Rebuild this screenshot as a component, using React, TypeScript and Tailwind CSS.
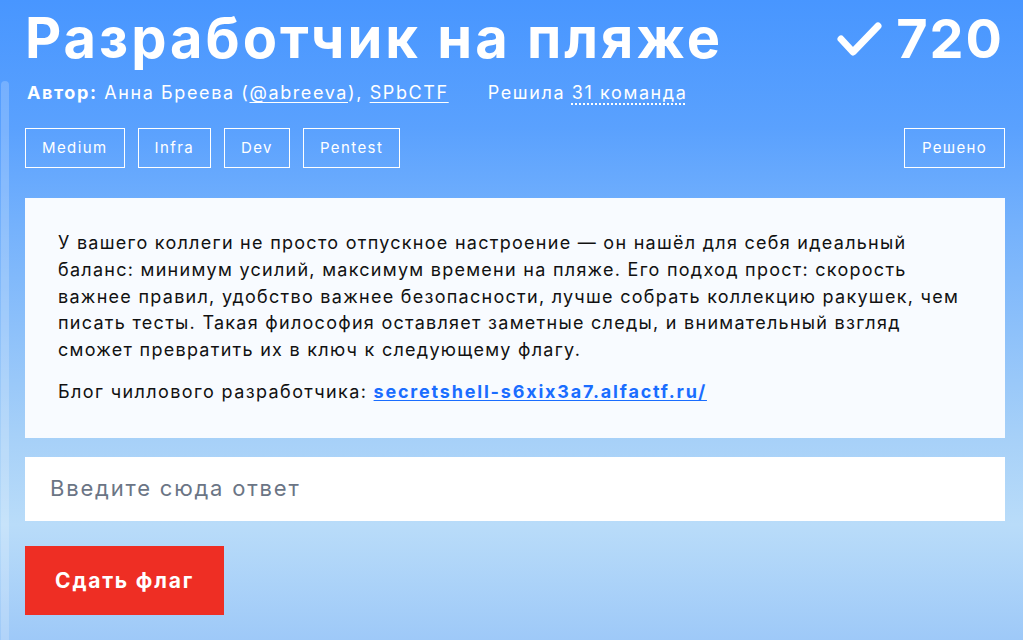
import React from "react";

export default function App() {
  const font = { fontFamily: "Inter, 'Noto Sans', sans-serif" };
  return (
    <div
      className="w-[1023px] h-[640px] overflow-hidden flex bg-[linear-gradient(180deg,#4896ff_0%,#5aa1fe_20%,#74b1fc_35%,#a6d0f8_68%,#b9dcf9_82%,#9ec9f8_100%)] text-white"
      style={font}
    >
      <div className="w-[9px] shrink-0 flex flex-col">
        <div className="mt-[81px] ml-[1px] flex-1 rounded-t-full bg-[#ffffff33]" />
      </div>
      <div className="flex-1 pl-[16px] pr-[18px] flex flex-col">
        <div className="flex items-start justify-between mt-[6px]">
          <h1 className="text-[56px] leading-[64px] font-bold tracking-[3px]">Разработчик на пляже</h1>
          <div className="flex items-center gap-[10px] mr-[1px] mt-[3px]">
            <svg width="50" height="40" viewBox="0 0 50 40" fill="none" className="mt-[4px]">
              <path d="M5 18 L17 31 L42 5" stroke="white" strokeWidth="7" strokeLinecap="round" strokeLinejoin="round" />
            </svg>
            <span className="text-[54px] leading-[60px] font-bold tracking-[2px]">720</span>
          </div>
        </div>
        <div className="flex items-center text-[18px] leading-[24px] mt-[11px] ml-[2px] tracking-[1.6px]">
          <span>
            <b className="font-bold">Автор:</b> Анна Бреева (<span className="underline underline-offset-[3px] decoration-1">@abreeva</span>),{" "}
            <span className="underline underline-offset-[3px] decoration-1">SPbCTF</span>
          </span>
          <span className="ml-[39px]">
            Решила{" "}
            <span className="underline decoration-dotted underline-offset-[4px] decoration-2">31 команда</span>
          </span>
        </div>
        <div className="flex justify-between mt-[23px]">
          <div className="flex gap-[13px]">
            {["Medium", "Infra", "Dev", "Pentest"].map((t) => (
              <div key={t} className="h-[40px] px-[16px] border border-white flex items-center text-[15px] tracking-[1.4px]">
                {t}
              </div>
            ))}
          </div>
          <div className="h-[40px] px-[17px] border border-white flex items-center text-[15px] tracking-[1.3px]">Решено</div>
        </div>
        <div className="mt-[30px] bg-[#f8fbff] text-[#111111] px-[33px] pt-[32px] pb-[32px] text-[18px] leading-[26.8px] tracking-[1.27px]">
          <p className="whitespace-nowrap">
            У вашего коллеги не просто отпускное настроение — он нашёл для себя идеальный
            <br />
            баланс: минимум усилий, максимум времени на пляже. Его подход прост: скорость
            <br />
            важнее правил, удобство важнее безопасности, лучше собрать коллекцию ракушек, чем
            <br />
            писать тесты. Такая философия оставляет заметные следы, и внимательный взгляд
            <br />
            сможет превратить их в ключ к следующему флагу.
          </p>
          <p className="mt-[15px] whitespace-nowrap">
            <span className="tracking-[1.4px]">Блог чиллового разработчика:</span>{" "}
            <a className="font-bold text-[#1a6dff] underline underline-offset-[2px] tracking-[1.8px]">secretshell-s6xix3a7.alfactf.ru/</a>
          </p>
        </div>
        <div className="mt-[19px] h-[64px] bg-white flex items-center px-[25px]">
          <span className="text-[22px] text-[#6b7585] tracking-[1.8px]">Введите сюда ответ</span>
        </div>
        <div className="mt-[25px]">
          <button className="h-[69px] w-[199px] bg-[#ee2e24] text-white font-bold text-[21px] tracking-[1.8px] flex items-center justify-center">
            Сдать флаг
          </button>
        </div>
      </div>
    </div>
  );
}
